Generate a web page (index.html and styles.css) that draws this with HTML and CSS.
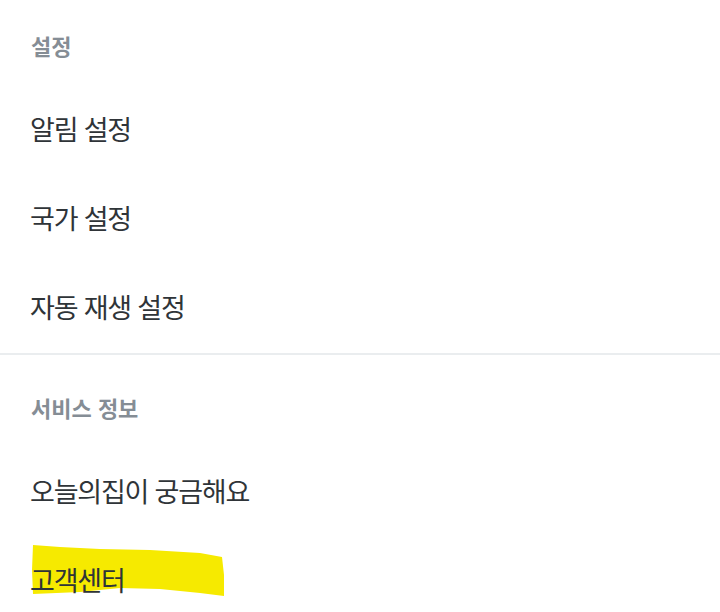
FILE: index.html
```html
<!DOCTYPE html>
<html lang="ko">
  <head>
    <meta charset="UTF-8" />
    <meta name="viewport" content="width=device-width, initial-scale=1.0" />
    <title>설정</title>
    <link rel="stylesheet" href="styles.css">
  </head>
  <body>
    <div class="group">
      <h3 class="title">설정</h3>
      <div class="item">알림 설정</div>
      <div class="item">국가 설정</div>
      <div class="item">자동 재생 설정</div>
    </div>
    <div class="group">
      <h3 class="title">서비스 정보</h3>
      <div class="item">오늘의집이 궁금해요</div>
      <div class="item marked">
        <svg class="marker" width="240" height="89" viewBox="0 0 240 89">
          <polygon points="33,10 60,12 100,14 150,15 200,18 222,22 224,40 224,61 200,58 160,54 120,53 80,57 33,59 32,35" fill="#f6ea00" />
        </svg>
        <span>고객센터</span>
      </div>
    </div>
  </body>
</html>
```

FILE: styles.css
```css
* {
  margin: 0;
  padding: 0;
  box-sizing: border-box;
}
body {
  width: 720px;
  height: 612px;
  overflow: hidden;
  background: #fff;
  font-family: "Noto Sans CJK KR", "Noto Sans", sans-serif;
  color: #2f3438;
}
.group {
  padding: 0 0 2px;
}
.group + .group {
  border-top: 2px solid #eaedef;
  padding-top: 7px;
}
.title {
  height: 84px;
  padding: 30px 0 0 31px;
  line-height: 30px;
  font-size: 22px;
  font-weight: 700;
  color: #858d95;
}
.item {
  position: relative;
  height: 89px;
  padding: 0 0 0 30px;
  line-height: 89px;
  font-size: 27px;
  letter-spacing: -1.2px;
}
.item span {
  position: relative;
}
.marker {
  position: absolute;
  left: 0;
  top: 0;
}
```
